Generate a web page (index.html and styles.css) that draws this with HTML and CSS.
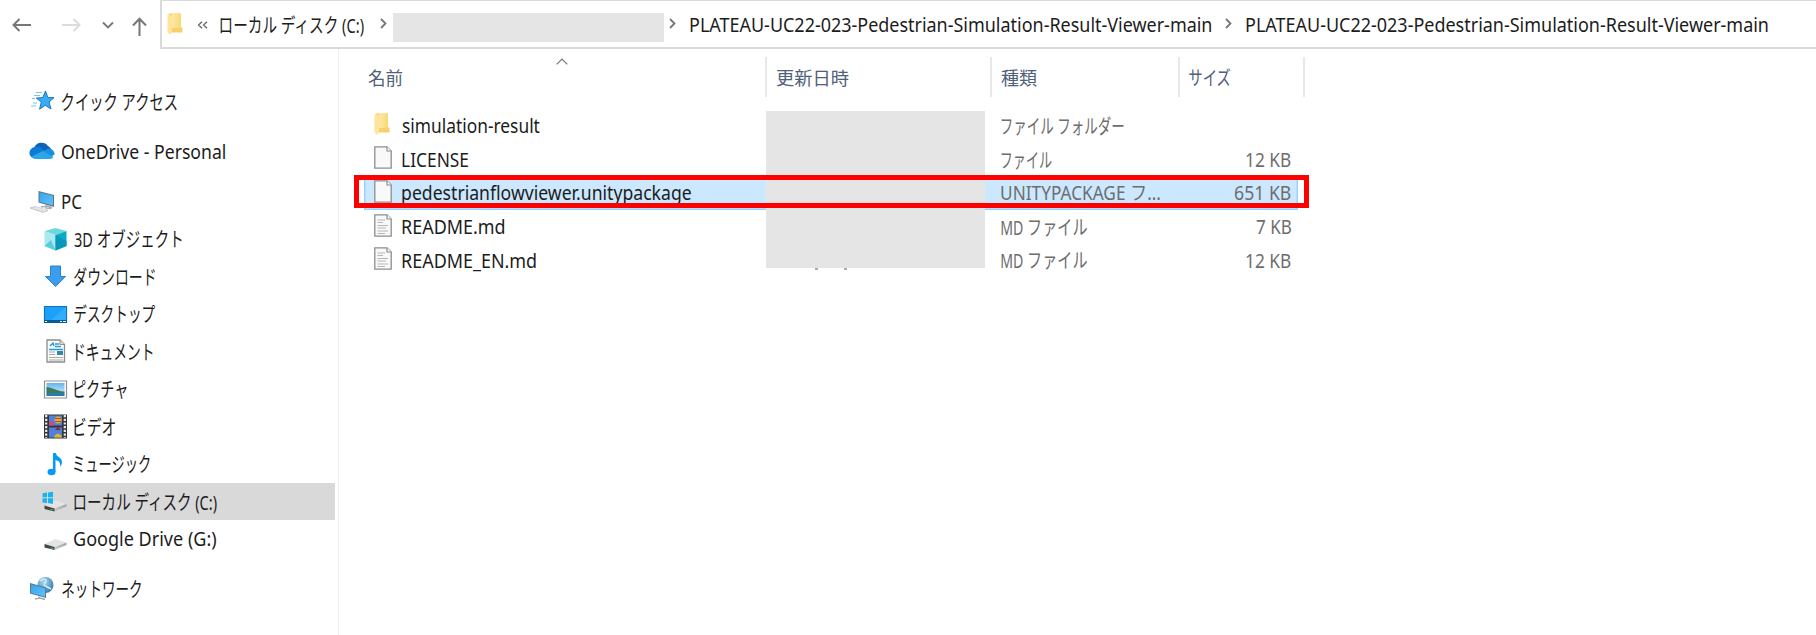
FILE: index.html
```html
<!DOCTYPE html>
<html lang="ja">
<head>
<meta charset="utf-8">
<title>Explorer</title>
<link rel="stylesheet" href="styles.css">
</head>
<body>
<svg class="defs" width="0" height="0">
  <defs>
    <linearGradient id="fold" x1="0" x2="1"><stop offset="0" stop-color="#ffe9a6"/><stop offset="1" stop-color="#f8d775"/></linearGradient>
    <linearGradient id="screen" x1="0" x2="1" y2="1"><stop offset="0" stop-color="#35a6ee"/><stop offset="1" stop-color="#63c0fa"/></linearGradient>
    <linearGradient id="metal" x1="0" x2="1"><stop offset="0" stop-color="#c9c9c9"/><stop offset="1" stop-color="#a5a5a5"/></linearGradient>
    <linearGradient id="sky" x2="0" y2="1"><stop offset="0" stop-color="#62b4ee"/><stop offset="1" stop-color="#e3f3fb"/></linearGradient>
    <radialGradient id="globe" cx=".4" cy=".3" r=".8"><stop offset="0" stop-color="#a9d9ef"/><stop offset="1" stop-color="#2872a5"/></radialGradient>
    <symbol id="folder" viewBox="0 0 16 22"><path d="M2 .5H14V14l1.500 1V19.500H3z" fill="#f5d06c"/><path d="M5 .5H14V15H5z" fill="url(#fold)"/><path d="M.5.5 5 3V18l-1.500 4L.5 19.500z" fill="#ffe49a"/></symbol>
    <symbol id="page" viewBox="0 0 18 23"><path d="M.8.8H13L17.200 5V22.200H.8z" fill="#f8f9fa" stroke="#8d8d8d" stroke-width="1.300"/><path d="M13 .8V5h4.200" fill="#fff" stroke="#8d8d8d" stroke-width="1.200"/></symbol>
    <symbol id="textpage" viewBox="0 0 18 23"><use href="#page"/><path d="M3.500 6H11M3.500 8.500H9M3.500 11.500H14M3.500 14H12M3.500 17H14M3.500 19.500H11" stroke="#b5b5b5" stroke-width="1.100"/></symbol>
    <symbol id="chev" viewBox="0 0 7 11"><path d="M1 1l4.500 4.500L1 10" fill="none" stroke="#777" stroke-width="1.800"/></symbol>
    <symbol id="drive" viewBox="0 0 24 14"><path d="M1 7.500 12 2.500 23 6 11 10.500z" fill="#e4e4e4"/><path d="M11 10.500 23 6V8.500L11 13.500z" fill="url(#metal)"/><path d="M1 7.500 11 10.500V13.500L1 11z" fill="#454545"/><path d="M7 11.300l2.500.7" stroke="#43b65a" stroke-width="1.200"/></symbol>
  </defs>
</svg>
<div class="window">
  <header class="toolbar">
    <nav class="history">
      <svg class="back" viewBox="0 0 20 14"><path d="M19 7H1.500M7.500 1 1.500 7l6 6" fill="none" stroke="#777" stroke-width="2"/></svg>
      <svg class="forward" viewBox="0 0 20 14"><path d="M1 7H18.500M12.500 1l6 6-6 6" fill="none" stroke="#dcdcdc" stroke-width="2"/></svg>
      <svg class="recent" viewBox="0 0 12 8"><path d="M1 1.500 6 6.500 11 1.500" fill="none" stroke="#777" stroke-width="1.900"/></svg>
      <svg class="up" viewBox="0 0 15 19"><path d="M7.500 19V1.800M1 8.500 7.500 1.800 14 8.500" fill="none" stroke="#777" stroke-width="2"/></svg>
    </nav>
    <div class="address">
      <svg class="addr-folder"><use href="#folder"/></svg>
      <svg class="overflow" viewBox="0 0 11 8"><path d="M5 .7 1.500 4 5 7.300M10 .7 6.500 4 10 7.300" fill="none" stroke="#666" stroke-width="1.300"/></svg>
      <span class="t kana" data-w="145">ローカル ディスク (C:)</span>
      <svg class="sep s1"><use href="#chev"/></svg>
      <span class="mask"></span>
      <svg class="sep s2"><use href="#chev"/></svg>
      <span class="t crumb" data-w="521.500">PLATEAU-UC22-023-Pedestrian-Simulation-Result-Viewer-main</span>
      <svg class="sep s3"><use href="#chev"/></svg>
      <span class="t crumb" data-w="522">PLATEAU-UC22-023-Pedestrian-Simulation-Result-Viewer-main</span>
    </div>
  </header>
  <div class="body">
    <aside class="sidebar">
      <div class="node root"><svg class="ic" viewBox="0 0 26 26"><path d="M16.500 3l2.300 6.500 6.200.2-5 4.200 2 7.100-5.800-3.700-5.600 3.900 1.700-7.100-5-4 6.500-.6z" fill="#38adf5" stroke="#1976bd"/><path d="M7 4.500h6M5 7.500h6M3 10.500h3M4 15h4M2 18h5" stroke="#7ac4ef" stroke-width="1.200"/></svg><span class="t kana" data-w="116">クイック アクセス</span></div>
      <div class="node root gap"><svg class="ic" viewBox="0 0 26 26"><path d="M5 10a8 8 0 0 1 14-2 6 6 0 0 1 3 3L13 15z" fill="#0f62b9"/><path d="M.8 17A6 6 0 0 1 6 9a6 6 0 0 1 6 1l8 6-15 4.500A6 6 0 0 1 .8 17z" fill="#0b7bd3"/><path d="M12.500 14.500 18 11a5.500 5.500 0 0 1 7.500 5.500l-3 2z" fill="#1690df"/><path d="M2.500 18.500 14 13l10.500 6a4.500 4.500 0 0 1-3.500 2H6.500a5.500 5.500 0 0 1-4-2.500z" fill="#2aa7ea"/></svg><span class="t" data-w="163.500">OneDrive - Personal</span></div>
      <div class="node root gap"><svg class="ic" viewBox="0 0 26 26"><path d="M9.500 3 25 7V19L9.500 14.500z" fill="#5e7485"/><path d="M10.500 4.300 24 7.800V17.500L10.500 13.700z" fill="url(#screen)"/><path d="M17 17v3l5 .5M12 19l7-1 4 2" stroke="#a9b0b5" stroke-width="1.500" fill="none"/><path d="M1 20l5-1.500 13 4-5 2z" fill="#d7dadd" stroke="#aeb2b5" stroke-width=".6"/><path d="M4 20l12 3M6 19l11 3.300" stroke="#f5f5f5" stroke-width=".6"/></svg><span class="t" data-w="20">PC</span></div>
      <div class="node"><svg class="ic" viewBox="0 0 26 26"><path d="M2.500 5 13.500 2 24.500 5 13.500 9z" fill="#6bd7df"/><path d="M2.500 5 13.500 9V24.500L2.500 20z" fill="#a9eaf0"/><path d="M13.500 9 24.500 5V20L13.500 24.500z" fill="#0cabc4"/><path d="M2.500 20 9 14l4.500 10.500z" fill="#59ccda"/><path d="M13.500 9 24.500 15V20l-11 4.500z" fill="#0797ba"/></svg><span class="t kana" data-w="108">3D オブジェクト</span></div>
      <div class="node"><svg class="ic" viewBox="0 0 26 26"><path d="M8.500 3h10V13.500h5L13.500 23.500 3.500 13.500h5z" fill="#3c9ced" stroke="#2b83cf"/></svg><span class="t kana" data-w="81">ダウンロード</span></div>
      <div class="node"><svg class="ic" viewBox="0 0 26 26"><path d="M2.500 5.500h22v16h-22z" fill="#1ba1fb" stroke="#1273b8" stroke-width="1.200"/><path d="M24 6v13H9z" fill="#41b5ff" opacity=".6"/><path d="M2 19h23v3H2z" fill="#0a5b91"/><path d="M3 20.500h2M18 20.500h2M21 20.500h3" stroke="#e5f5ff" stroke-width="1.100"/></svg><span class="t kana" data-w="81">デスクトップ</span></div>
      <div class="node doc"><svg class="ic" viewBox="0 0 26 26"><path d="M5 2h13l4.500 4.500V24H5z" fill="#fafafa" stroke="#8d8d8d" stroke-width="1.300"/><path d="M18 2v4.500h4.500" fill="#ddd" stroke="#8d8d8d"/><path d="M8 8l3-3 1 3M13 6h4M13 8.500h6M7 11.500h14" stroke="#249ad9" stroke-width="1.400" fill="none"/><path d="M7 14h6M7 16.500h6M7 19.500h14M7 22h14" stroke="#aaa" stroke-width="1.100"/><path d="M15 13h6v4h-6z" fill="#3586a9"/></svg><span class="t kana" data-w="77">ドキュメント</span></div>
      <div class="node"><svg class="ic" viewBox="0 0 26 26"><path d="M2.500 5h22v17h-22z" fill="#fff" stroke="#929292" stroke-width="1.200"/><path d="M4.500 7h18v13h-18z" fill="url(#sky)"/><path d="M4.500 11c5 0 9 4 18 4.500v1.500h-18z" fill="#3b7a5b"/><path d="M4.500 17h18V20h-18z" fill="#297aaf"/></svg><span class="t kana" data-w="53">ピクチャ</span></div>
      <div class="node"><svg class="ic" viewBox="0 0 26 26"><path d="M2 1.500h23v24H2z" fill="#363636"/><path d="M4.200 2v23M22.800 2v23" stroke="#eee" stroke-width="2.200" stroke-dasharray="2.200 1.500"/><path d="M7 2.500h13v10H7zM7 14.500h13v10H7z" fill="#507fe0"/><circle cx="16" cy="7" r="3.500" fill="#dcb527"/><path d="M13 5.500h6M13 8.500h6" stroke="#d63c26" stroke-width="1.200"/><path d="M7 8l5 2v2.500H7z" fill="#cd4b7b"/><path d="M13 17l3-3 3 3z" fill="#842d20"/><path d="M12 24.500c1-5 7-5 8 0z" fill="#e1b721"/></svg><span class="t kana" data-w="41.500">ビデオ</span></div>
      <div class="node"><svg class="ic" viewBox="0 0 26 26"><ellipse cx="9.500" cy="21" rx="4" ry="3.200" fill="#079bf5"/><path d="M11 21V2h3c0 4 6 4 6 9 0 2-1 3.500-2 4.500.6-3.500-.5-5.500-4.500-6.500V21z" fill="#079bf5"/></svg><span class="t kana" data-w="76">ミュージック</span></div>
      <div class="node selected"><svg class="ic" viewBox="0 0 26 26"><svg x="1.500" y="10" width="24" height="14"><use href="#drive"/></svg><path d="M.5 3.200 5 2.600V7.300H.5zM6 2.500 11 1.800V7.300H6zM.5 8.300H5V13L.5 12.400zM6 8.300h5v5.600L6 13.100z" transform="translate(0 2)" fill="#17b4f0"/></svg><span class="t kana" data-w="144">ローカル ディスク (C:)</span></div>
      <div class="node"><svg class="ic" viewBox="0 0 26 26"><svg x="1.500" y="10.500" width="24" height="14"><use href="#drive"/></svg></svg><span class="t" data-w="142">Google Drive (G:)</span></div>
      <div class="node root gap"><svg class="ic" viewBox="0 0 26 26"><circle cx="16.500" cy="9" r="8" fill="url(#globe)"/><path d="M11 5c5-4 8-1 5 2s2 3 6 6" stroke="#d3eef7" stroke-width="1.500" fill="none"/><path d="M1 7 17 11.500V22L1 17.500z" fill="#527b9a"/><path d="M2 8.500 16 12.300V20.700L2 16.800z" fill="url(#screen)"/><path d="M10 20.500v2M6 23l5-1 5 1.500" stroke="#a3abb0" stroke-width="1.500" fill="none"/></svg><span class="t kana" data-w="79">ネットワーク</span></div>
    </aside>
    <main class="files">
      <div class="head">
        <div class="h name"><span class="t" data-w="35">名前</span><svg class="sort" viewBox="0 0 12 7"><path d="M.7 6.300 6 1l5.300 5.300" fill="none" stroke="#777" stroke-width="1.200"/></svg></div>
        <div class="h"><span class="t" data-w="73">更新日時</span></div>
        <div class="h"><span class="t" data-w="36">種類</span></div>
        <div class="h"><span class="t kana" data-w="42">サイズ</span></div>
      </div>
      <div class="rows">
        <div class="row"><div class="file"><svg class="fi fo"><use href="#folder"/></svg><span class="t" data-w="138">simulation-result</span></div><div class="kind"><span class="t kana" data-w="123">ファイル フォルダー</span></div><div class="size"></div></div>
        <div class="row"><div class="file"><svg class="fi"><use href="#page"/></svg><span class="t" data-w="66.500">LICENSE</span></div><div class="kind"><span class="t kana" data-w="51">ファイル</span></div><div class="size"><span class="t" data-w="45">12 KB</span></div></div>
        <div class="row chosen"><div class="file"><svg class="fi"><use href="#page"/></svg><span class="t" data-w="289">pedestrianflowviewer.unitypackage</span></div><div class="kind"><span class="t" data-w="159">UNITYPACKAGE フ...</span></div><div class="size"><span class="t" data-w="56">651 KB</span></div></div>
        <div class="row"><div class="file"><svg class="fi"><use href="#textpage"/></svg><span class="t" data-w="103">README.md</span></div><div class="kind"><span class="t" data-w="86.500">MD <span class="kana">ファイル</span></span></div><div class="size"><span class="t" data-w="35.500">7 KB</span></div></div>
        <div class="row"><div class="file"><svg class="fi"><use href="#textpage"/></svg><span class="t" data-w="134.500">README_EN.md</span></div><div class="kind"><span class="t" data-w="86.500">MD <span class="kana">ファイル</span></span></div><div class="size"><span class="t" data-w="45">12 KB</span></div></div>
        <div class="date-mask"><i class="tick"></i><i class="tick"></i></div>
        <div class="callout"></div>
      </div>
    </main>
  </div>
</div>
<script src="fit.js"></script>
</body>
</html>
```
FILE: styles.css
```css
* { box-sizing: border-box; }
body {
  margin: 0;
  background: #fff;
  color: #1c1c1c;
  font: 19px/30px "Noto Sans", "Noto Sans CJK JP", sans-serif;
}
svg { display: block; flex: none; }
.defs { position: absolute; }
.window { height: 635px; display: flex; flex-direction: column; overflow: hidden; }
.t { display: block; flex: none; white-space: nowrap; transform-origin: 0 50%; padding-top: 1px; }
.kana { font-size: 20.300px; line-height: 30px; }

.toolbar { display: flex; height: 49px; flex: none; }
.history { width: 160px; display: flex; align-items: flex-start; padding: 18px 0 0 12px; }
.back, .forward { width: 20px; height: 14px; }
.forward { margin-left: 29px; }
.recent { width: 12px; height: 8px; margin: 3px 0 0 21px; }
.up { width: 15px; height: 19px; margin: -1px 0 0 18px; }
.address {
  flex: 1;
  display: flex;
  align-items: center;
  border: solid #dadada;
  border-width: 1.500px 0 2px 2px;
  padding-left: 5px;
}
.address .t { padding-top: 2px; }
.crumb { font-size: 19.500px; }
.addr-folder { width: 16px; height: 22px; }
.overflow { width: 11px; height: 8px; margin: 1px 12px 0 14px; }
.sep { width: 7px; height: 11px; margin-top: -1px; }
.s1 { margin: -1px 6px 0 15px; }
.s2 { margin: -1px 14px 0 5px; }
.s3 { margin: -1px 14px 0 13.500px; }
.mask { width: 271px; height: 29px; margin-top: 7px; background: #e5e5e5; }

.body { flex: 1; display: flex; min-height: 0; }
.sidebar { width: 339px; border-right: 1px solid #f0f0f0; padding-top: 33.500px; }
.node { height: 37.500px; width: 335px; display: flex; align-items: center; padding-left: 41.500px; }
.node.root { padding-left: 29px; }
.node.gap { margin-top: 12.500px; }
.node.selected { background: #d9d9d9; }
.ic { width: 26px; height: 26px; margin-right: 6.500px; }
.root .ic { margin-right: 6.500px; }
.doc .ic { margin-right: 8px; }

.files { padding: 8px 0 0 25px; }
.head { display: grid; grid-template-columns: 403px 225px 188px 125px; height: 40px; color: #51607a; font-size: 18px; }
.h { display: flex; align-items: center; padding: 0 0 0 9px; border-right: 2px solid #e8e8e8; }
.h.name { padding-left: 4px; position: relative; }
.h .kana { font-size: 19.500px; }
.sort { position: absolute; left: 192px; top: 1px; width: 12px; height: 7px; }
.rows { position: relative; padding-top: 11.700px; }
.row { height: 33.700px; width: 934px; display: grid; grid-template-columns: 637px 189px 108px; align-items: center; }
.row > div { display: flex; align-items: center; }
.row.chosen { background: #cce8ff; box-shadow: inset 0 0 0 1.500px #99d1ff; }
.fi { width: 18px; height: 23px; margin: -3px 10px 0 9.500px; }
.fi.fo { width: 16px; height: 22px; margin-right: 12px; }
.kind, .size { color: #6d6d6d; }
.row .size { justify-content: flex-end; padding-right: 7px; }
.date-mask {
  position: absolute; left: 402px; top: 14px; width: 219px; height: 157px;
  background: #e5e5e5;
  display: flex; align-items: flex-end; gap: 26px; padding-left: 49px;
}
.tick { width: 3px; height: 2px; margin-bottom: -2px; background: #aaa; }
.callout { position: absolute; left: -10px; top: 78px; width: 955px; height: 33px; border: 5px solid #f00; }
```
FILE: fit.js
```javascript
// Condenses each label so that its drawn width equals data-w.
const ctx = document.createElement('canvas').getContext('2d');
for (const el of document.querySelectorAll('.t')) {
  const cs = getComputedStyle(el);
  ctx.font = `${cs.fontSize} ${cs.fontFamily}`;
  const m = ctx.measureText(el.textContent);
  const w = parseFloat(el.dataset.w);
  const inner = el.querySelector('.kana');
  let ink = m.actualBoundingBoxRight + m.actualBoundingBoxLeft;
  if (inner) {
    ctx.font = `${getComputedStyle(inner).fontSize} ${cs.fontFamily}`;
    const big = ctx.measureText(inner.textContent).width;
    ctx.font = `${cs.fontSize} ${cs.fontFamily}`;
    ink += big - ctx.measureText(inner.textContent).width;
  }
  const k = w / ink;
  el.style.width = w + 'px';
  el.style.transform = `translateX(${m.actualBoundingBoxLeft * k}px) scaleX(${k})`;
}
```
